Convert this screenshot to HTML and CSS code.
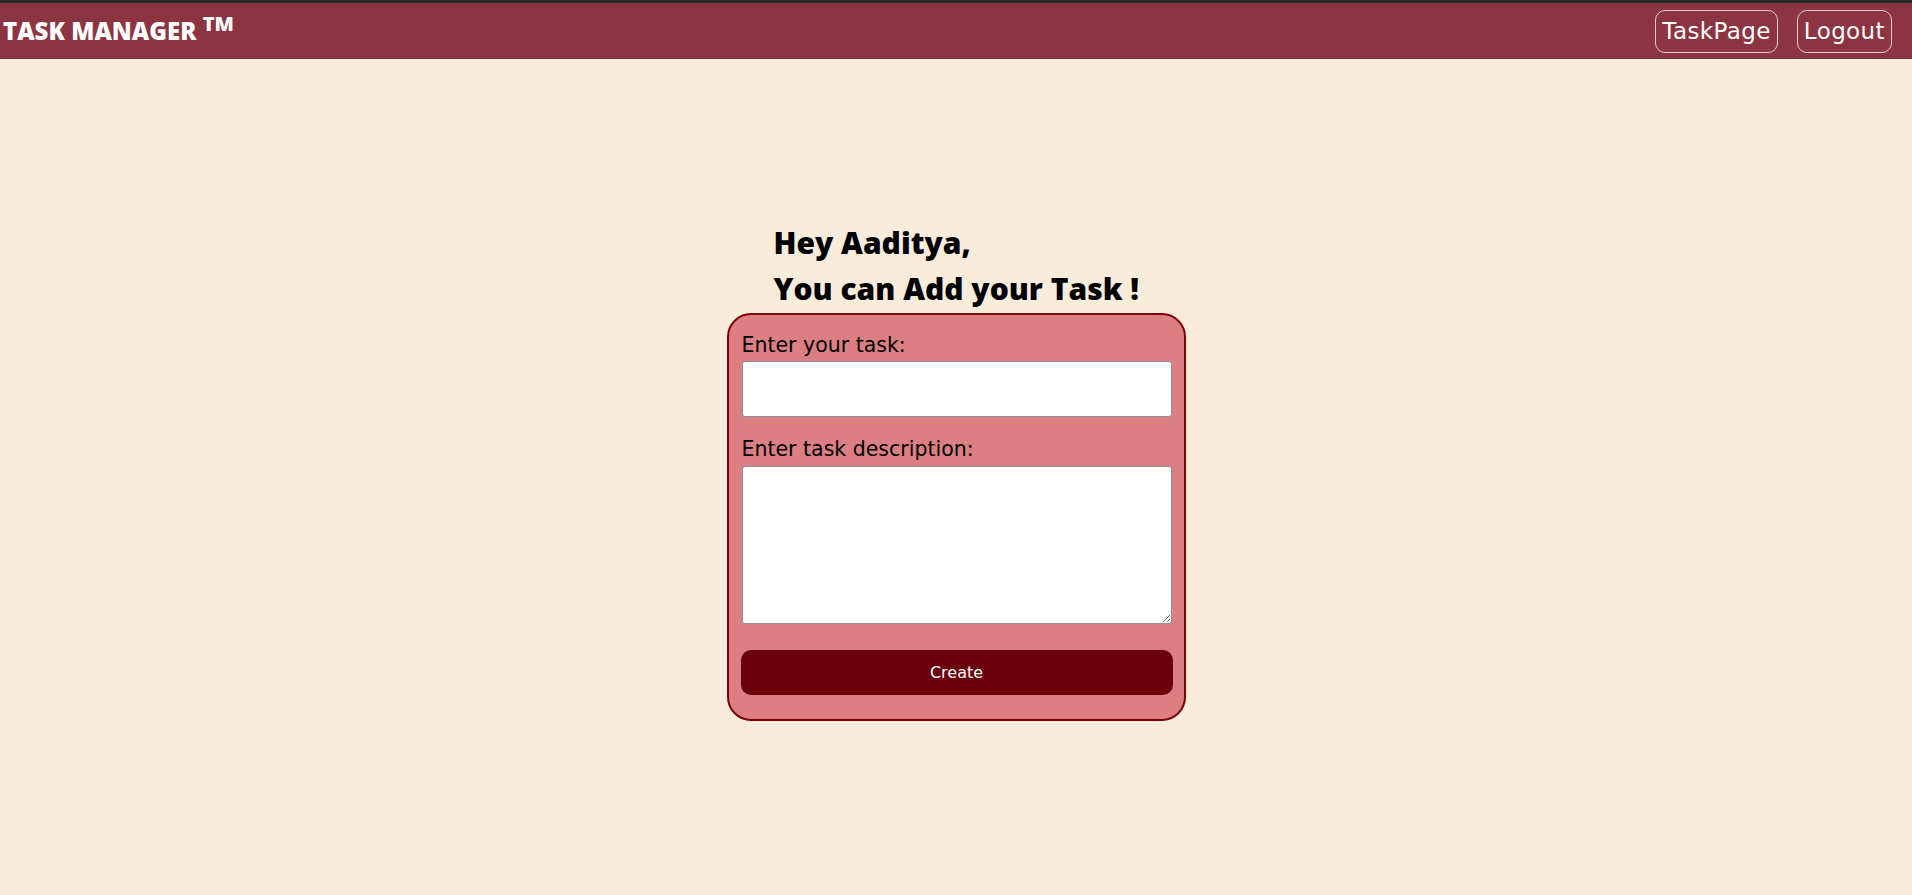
FILE: index.html
```html
<!DOCTYPE html>
<html lang="en">
<head>
<meta charset="utf-8">
<title>Task Manager</title>
<link rel="stylesheet" href="styles.css">
</head>
<body>
<header class="topbar">
  <div class="brand">TASK MANAGER <sup class="tm">TM</sup></div>
  <nav class="nav">
    <a class="nav-btn" href="#">TaskPage</a>
    <a class="nav-btn" href="#">Logout</a>
  </nav>
</header>
<main class="main">
  <h2 class="greeting">Hey Aaditya,<br>You can Add your Task !</h2>
  <form class="task-form">
    <label class="field-label" for="task">Enter your task:</label>
    <input class="field-input" id="task" type="text">
    <label class="field-label second" for="desc">Enter task description:</label>
    <textarea class="field-area" id="desc"></textarea>
    <button class="create-btn" type="button">Create</button>
  </form>
</main>
</body>
</html>
```

FILE: styles.css
```css
* { box-sizing: border-box; }
html, body { margin: 0; padding: 0; }
body {
  background: #faecdb;
  font-family: "DejaVu Sans", "Open Sans", sans-serif;
  min-height: 895px;
}
.topbar {
  height: 59px;
  border-top: 3px solid #2a2a2c;
  background: #8c3442;
  display: flex;
  align-items: center;
  justify-content: space-between;
  padding: 0 20px 0 3px;
}
.brand {
  color: #fff;
  font-family: "Open Sans", sans-serif;
  font-weight: 800;
  font-size: 24px;
  line-height: 30px;
}
.tm {
  font-size: 20px;
  line-height: 0;
  vertical-align: 9px;
}
.nav {
  display: flex;
  gap: 19px;
}
.nav-btn {
  color: #fff;
  text-decoration: none;
  font-size: 23px;
  letter-spacing: 0.4px;
  line-height: 41px;
  height: 43px;
  padding: 0 6px;
  border: 1px solid #e6c9cd;
  border-radius: 10px;
}
.main {
  display: flex;
  flex-direction: column;
  align-items: center;
  padding-top: 161px;
}
.greeting {
  margin: 0;
  font-family: "Open Sans", sans-serif;
  font-size: 30px;
  font-weight: 800;
  line-height: 46px;
  color: #000;
  width: 365px;
  white-space: nowrap;
}
.task-form {
  width: 459px;
  margin-top: 1px;
  background: #dc7f83;
  border: 2px solid #7d0008;
  border-radius: 24px;
  padding: 15px 12px 24px 13px;
  display: flex;
  flex-direction: column;
}
.field-label {
  font-size: 20.5px;
  line-height: 30px;
  color: #000;
  margin-bottom: 1px;
}
.field-label.second {
  margin-top: 17px;
  margin-bottom: 2px;
}
.field-input, .field-area {
  width: 100%;
  background: #fff;
  border: 1px solid #8b9099;
  border-radius: 3px;
  font-family: inherit;
  font-size: 16px;
}
.field-input { height: 56px; }
.field-area { height: 158px; resize: vertical; display: block; }
.create-btn {
  margin-top: 26px;
  margin-left: -1px;
  width: calc(100% + 2px);
  height: 45px;
  background: #6b0009;
  color: #fff;
  border: none;
  border-radius: 10px;
  font-family: inherit;
  font-size: 16px;
}
```
